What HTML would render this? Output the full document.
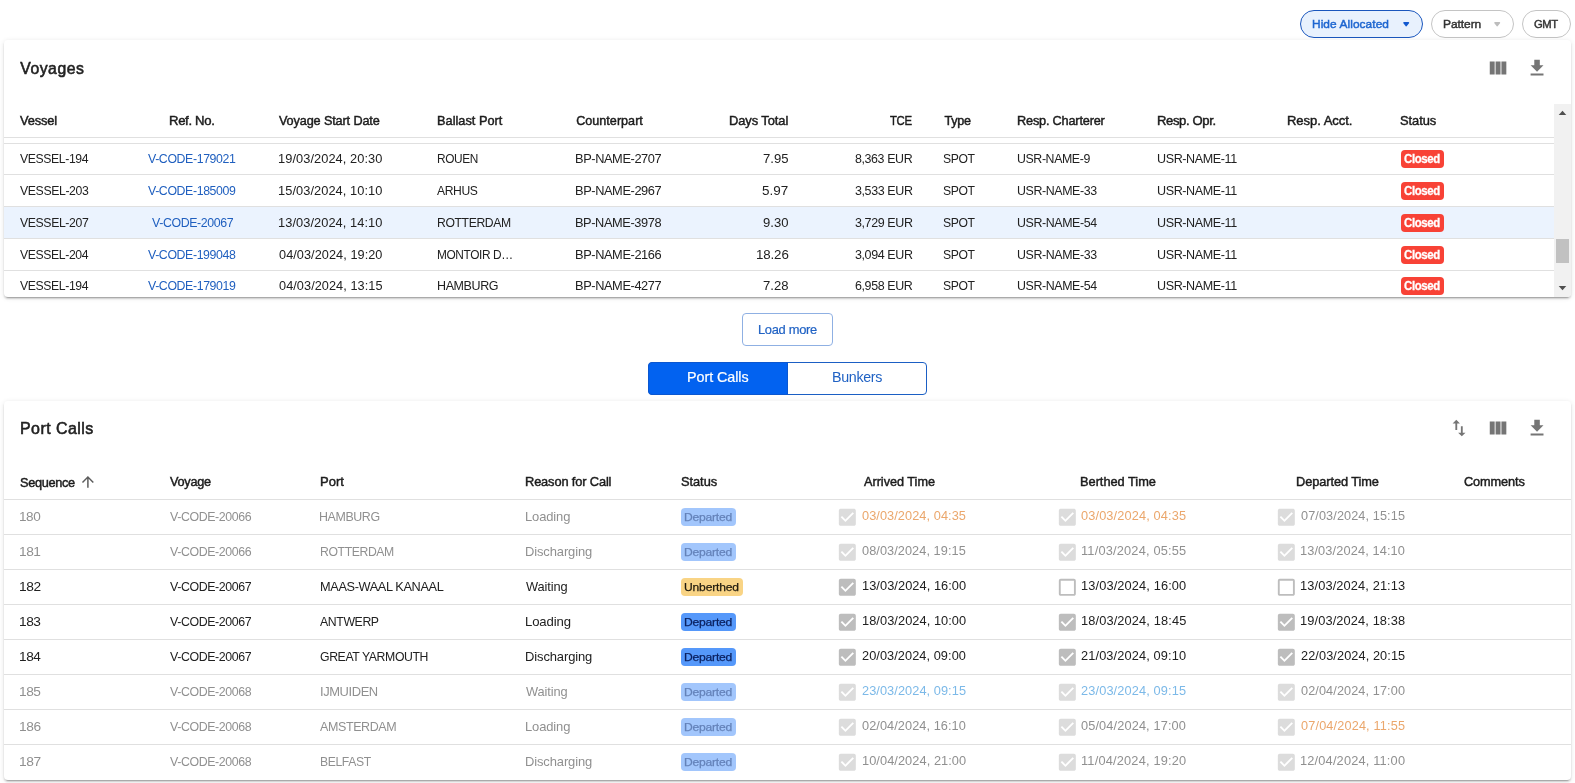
<!DOCTYPE html>
<html><head><meta charset="utf-8"><title>Voyages</title>
<style>
html,body{margin:0;padding:0;background:#fff;}
body{width:1575px;height:783px;position:relative;overflow:hidden;font-family:"Liberation Sans",sans-serif;}
#w{position:absolute;left:0;top:0;width:1575px;height:783px;will-change:transform;}
.t{position:absolute;white-space:nowrap;line-height:20px;height:20px;transform-origin:0 0;}
svg{display:block;overflow:visible}
</style></head><body><div id="w">
<div class="" style="position:absolute;left:1300px;top:10px;width:121px;height:25.6px;border:1px solid #1a56bd;background:#e8f1fd;border-radius:14px;"></div>
<span class="t" style="left:1312.31px;top:13.50px;font-size:11.7px;letter-spacing:0.069px;color:#1e66d0;transform:scaleX(1.0175);-webkit-text-stroke:0.45px #1e66d0;">Hide Allocated</span>
<svg style="position:absolute;left:1402.8px;top:21.9px" width="6.4" height="4.6" viewBox="0 0 6.4 4.6"><path d="M1 0.8H5.4L3.2 3.6Z" fill="#1259cf" stroke="#1259cf" stroke-width="1.6" stroke-linejoin="round"/></svg>
<div class="" style="position:absolute;left:1431.2px;top:10px;width:80.5px;height:25.6px;border:1px solid #c4c4c4;background:#fff;border-radius:14px;"></div>
<span class="t" style="left:1442.81px;top:13.50px;font-size:11.7px;letter-spacing:-0.067px;color:#333;transform:scaleX(1.0253);-webkit-text-stroke:0.45px #333;">Pattern</span>
<svg style="position:absolute;left:1493.7px;top:21.9px" width="6.4" height="4.6" viewBox="0 0 6.4 4.6"><path d="M1 0.8H5.4L3.2 3.6Z" fill="#bdbdbd" stroke="#bdbdbd" stroke-width="1.6" stroke-linejoin="round"/></svg>
<div class="" style="position:absolute;left:1522.2px;top:10px;width:46.7px;height:25.6px;border:1px solid #c4c4c4;background:#fff;border-radius:14px;"></div>
<span class="t" style="left:1534.26px;top:13.50px;font-size:11.7px;letter-spacing:-0.400px;color:#333;transform:scaleX(0.9631);-webkit-text-stroke:0.45px #333;">GMT</span>
<div class="" style="position:absolute;left:4px;top:40px;width:1567px;height:257px;background:#fff;border-radius:4px;box-shadow:0 3px 1px -2px rgba(0,0,0,.2),0 2px 2px 0 rgba(0,0,0,.14),0 1px 5px 0 rgba(0,0,0,.12);"></div>
<span class="t" style="left:20.30px;top:58.50px;font-size:15.75px;letter-spacing:0.517px;color:#212121;-webkit-text-stroke:0.55px #212121;">Voyages</span>
<svg style="position:absolute;left:1486.55px;top:57.20px" width="22.1" height="22.1" viewBox="0 0 24 24"><path fill="#757575" d="M14.67 5v14H9.33V5h5.34zm1 14H21V5h-5.33v14zm-7.34 0V5H3v14h5.33z"/></svg>
<svg style="position:absolute;left:1525.75px;top:57.25px" width="22.1" height="22.1" viewBox="0 0 24 24"><path fill="#757575" d="M19 9h-4V3H9v6H5l7 7 7-7zM5 18v2h14v-2H5z"/></svg>
<span class="t" style="left:20.21px;top:111.00px;font-size:12.6px;letter-spacing:-0.160px;color:#1c1c1c;transform:scaleX(1.0214);-webkit-text-stroke:0.45px #1c1c1c;">Vessel</span>
<span class="t" style="left:169.38px;top:111.00px;font-size:12.6px;letter-spacing:-0.329px;color:#1c1c1c;transform:scaleX(1.0436);-webkit-text-stroke:0.45px #1c1c1c;">Ref. No.</span>
<span class="t" style="left:279.02px;top:111.00px;font-size:12.6px;letter-spacing:-0.134px;color:#1c1c1c;transform:scaleX(1.0070);-webkit-text-stroke:0.45px #1c1c1c;">Voyage Start Date</span>
<span class="t" style="left:436.78px;top:111.00px;font-size:12.6px;letter-spacing:0.014px;color:#1c1c1c;transform:scaleX(1.0129);-webkit-text-stroke:0.45px #1c1c1c;">Ballast Port</span>
<span class="t" style="left:576.20px;top:111.00px;font-size:12.6px;letter-spacing:0.015px;color:#1c1c1c;-webkit-text-stroke:0.45px #1c1c1c;">Counterpart</span>
<span class="t" style="left:729.47px;top:111.00px;font-size:12.6px;letter-spacing:-0.078px;color:#1c1c1c;transform:scaleX(1.0249);-webkit-text-stroke:0.45px #1c1c1c;">Days Total</span>
<span class="t" style="left:889.90px;top:111.00px;font-size:12.6px;letter-spacing:-0.400px;color:#1c1c1c;transform:scaleX(0.9016);-webkit-text-stroke:0.45px #1c1c1c;">TCE</span>
<span class="t" style="left:944.60px;top:111.00px;font-size:12.6px;letter-spacing:-0.333px;color:#1c1c1c;-webkit-text-stroke:0.45px #1c1c1c;">Type</span>
<span class="t" style="left:1017.41px;top:111.00px;font-size:12.6px;letter-spacing:-0.196px;color:#1c1c1c;transform:scaleX(1.0110);-webkit-text-stroke:0.45px #1c1c1c;">Resp. Charterer</span>
<span class="t" style="left:1157.38px;top:111.00px;font-size:12.6px;letter-spacing:-0.350px;color:#1c1c1c;transform:scaleX(1.0362);-webkit-text-stroke:0.45px #1c1c1c;">Resp. Opr.</span>
<span class="t" style="left:1287.49px;top:111.00px;font-size:12.6px;letter-spacing:-0.045px;color:#1c1c1c;transform:scaleX(1.0347);-webkit-text-stroke:0.45px #1c1c1c;">Resp. Acct.</span>
<span class="t" style="left:1400.16px;top:111.00px;font-size:12.6px;letter-spacing:-0.040px;color:#1c1c1c;transform:scaleX(1.0228);-webkit-text-stroke:0.45px #1c1c1c;">Status</span>
<div class="" style="position:absolute;left:4px;top:137px;width:1550px;height:1px;background:#e0e0e0;"></div>
<div class="" style="position:absolute;left:4px;top:143px;width:1550px;height:1px;background:#e0e0e0;"></div>
<div class="" style="position:absolute;left:4px;top:207px;width:1550px;height:31px;background:#ebf3fe;"></div>
<div class="" style="position:absolute;left:4px;top:174px;width:1550px;height:1px;background:#e0e0e0;"></div>
<div class="" style="position:absolute;left:4px;top:206px;width:1550px;height:1px;background:#e0e0e0;"></div>
<div class="" style="position:absolute;left:4px;top:238px;width:1550px;height:1px;background:#e0e0e0;"></div>
<div class="" style="position:absolute;left:4px;top:270px;width:1550px;height:1px;background:#e0e0e0;"></div>
<span class="t" style="left:20.45px;top:149.00px;font-size:12.6px;letter-spacing:-0.400px;color:#212121;transform:scaleX(0.9698);">VESSEL-194</span>
<span class="t" style="left:148.18px;top:149.00px;font-size:12.6px;letter-spacing:-0.400px;color:#1f5fbf;transform:scaleX(0.9798);">V-CODE-179021</span>
<span class="t" style="left:278.22px;top:149.00px;font-size:12.6px;letter-spacing:0.069px;color:#212121;transform:scaleX(1.0171);">19/03/2024, 20:30</span>
<span class="t" style="left:436.80px;top:149.00px;font-size:12.6px;letter-spacing:-0.400px;color:#212121;transform:scaleX(0.9428);">ROUEN</span>
<span class="t" style="left:575.22px;top:149.00px;font-size:12.6px;letter-spacing:-0.400px;color:#212121;transform:scaleX(1.0172);">BP-NAME-2707</span>
<span class="t" style="left:762.64px;top:149.00px;font-size:12.6px;letter-spacing:0.000px;color:#212121;transform:scaleX(1.0399);">7.95</span>
<span class="t" style="left:855.31px;top:149.00px;font-size:12.6px;letter-spacing:-0.400px;color:#212121;transform:scaleX(0.9868);">8,363 EUR</span>
<span class="t" style="left:943.41px;top:149.00px;font-size:12.6px;letter-spacing:-0.400px;color:#212121;transform:scaleX(0.9669);">SPOT</span>
<span class="t" style="left:1016.98px;top:149.00px;font-size:12.6px;letter-spacing:-0.400px;color:#212121;transform:scaleX(0.9802);">USR-NAME-9</span>
<span class="t" style="left:1157.30px;top:149.00px;font-size:12.6px;letter-spacing:-0.400px;color:#212121;transform:scaleX(0.9967);">USR-NAME-11</span>
<div class="" style="position:absolute;left:1400.8px;top:150.1px;width:43.2px;height:17.9px;background:#f84236;border-radius:4px;"></div>
<span class="t" style="left:1404.45px;top:149.00px;font-size:12.5px;letter-spacing:-0.400px;color:#fff;transform:scaleX(0.9144);font-weight:700;-webkit-text-stroke:0.3px #fff;">Closed</span>
<span class="t" style="left:20.45px;top:181.00px;font-size:12.6px;letter-spacing:-0.400px;color:#212121;transform:scaleX(0.9740);">VESSEL-203</span>
<span class="t" style="left:148.18px;top:181.00px;font-size:12.6px;letter-spacing:-0.400px;color:#1f5fbf;transform:scaleX(0.9795);">V-CODE-185009</span>
<span class="t" style="left:278.22px;top:181.00px;font-size:12.6px;letter-spacing:0.069px;color:#212121;transform:scaleX(1.0171);">15/03/2024, 10:10</span>
<span class="t" style="left:436.96px;top:181.00px;font-size:12.6px;letter-spacing:-0.400px;color:#212121;transform:scaleX(0.9636);">ARHUS</span>
<span class="t" style="left:575.22px;top:181.00px;font-size:12.6px;letter-spacing:-0.400px;color:#212121;transform:scaleX(1.0172);">BP-NAME-2967</span>
<span class="t" style="left:762.34px;top:181.00px;font-size:12.6px;letter-spacing:0.000px;color:#212121;transform:scaleX(1.0689);">5.97</span>
<span class="t" style="left:855.09px;top:181.00px;font-size:12.6px;letter-spacing:-0.400px;color:#212121;transform:scaleX(0.9918);">3,533 EUR</span>
<span class="t" style="left:943.41px;top:181.00px;font-size:12.6px;letter-spacing:-0.400px;color:#212121;transform:scaleX(0.9669);">SPOT</span>
<span class="t" style="left:1016.91px;top:181.00px;font-size:12.6px;letter-spacing:-0.400px;color:#212121;transform:scaleX(0.9841);">USR-NAME-33</span>
<span class="t" style="left:1157.30px;top:181.00px;font-size:12.6px;letter-spacing:-0.400px;color:#212121;transform:scaleX(0.9967);">USR-NAME-11</span>
<div class="" style="position:absolute;left:1400.8px;top:182px;width:43.2px;height:17.9px;background:#f84236;border-radius:4px;"></div>
<span class="t" style="left:1404.45px;top:181.00px;font-size:12.5px;letter-spacing:-0.400px;color:#fff;transform:scaleX(0.9144);font-weight:700;-webkit-text-stroke:0.3px #fff;">Closed</span>
<span class="t" style="left:20.21px;top:213.00px;font-size:12.6px;letter-spacing:-0.400px;color:#212121;transform:scaleX(0.9730);">VESSEL-207</span>
<span class="t" style="left:151.91px;top:213.00px;font-size:12.6px;letter-spacing:-0.400px;color:#1f5fbf;transform:scaleX(0.9819);">V-CODE-20067</span>
<span class="t" style="left:278.22px;top:213.00px;font-size:12.6px;letter-spacing:0.069px;color:#212121;transform:scaleX(1.0171);">13/03/2024, 14:10</span>
<span class="t" style="left:436.80px;top:213.00px;font-size:12.6px;letter-spacing:-0.400px;color:#212121;transform:scaleX(0.9682);">ROTTERDAM</span>
<span class="t" style="left:575.22px;top:213.00px;font-size:12.6px;letter-spacing:-0.400px;color:#212121;transform:scaleX(1.0153);">BP-NAME-3978</span>
<span class="t" style="left:762.64px;top:213.00px;font-size:12.6px;letter-spacing:0.000px;color:#212121;transform:scaleX(1.0359);">9.30</span>
<span class="t" style="left:855.09px;top:213.00px;font-size:12.6px;letter-spacing:-0.400px;color:#212121;transform:scaleX(0.9918);">3,729 EUR</span>
<span class="t" style="left:943.41px;top:213.00px;font-size:12.6px;letter-spacing:-0.400px;color:#212121;transform:scaleX(0.9667);">SPOT</span>
<span class="t" style="left:1016.91px;top:213.00px;font-size:12.6px;letter-spacing:-0.400px;color:#212121;transform:scaleX(0.9840);">USR-NAME-54</span>
<span class="t" style="left:1157.30px;top:213.00px;font-size:12.6px;letter-spacing:-0.400px;color:#212121;transform:scaleX(0.9967);">USR-NAME-11</span>
<div class="" style="position:absolute;left:1400.8px;top:214.1px;width:43.2px;height:17.9px;background:#f84236;border-radius:4px;"></div>
<span class="t" style="left:1404.45px;top:213.00px;font-size:12.5px;letter-spacing:-0.400px;color:#fff;transform:scaleX(0.9144);font-weight:700;-webkit-text-stroke:0.3px #fff;">Closed</span>
<span class="t" style="left:20.45px;top:245.00px;font-size:12.6px;letter-spacing:-0.400px;color:#212121;transform:scaleX(0.9698);">VESSEL-204</span>
<span class="t" style="left:148.18px;top:245.00px;font-size:12.6px;letter-spacing:-0.400px;color:#1f5fbf;transform:scaleX(0.9794);">V-CODE-199048</span>
<span class="t" style="left:278.85px;top:245.00px;font-size:12.6px;letter-spacing:0.069px;color:#212121;transform:scaleX(1.0075);">04/03/2024, 19:20</span>
<span class="t" style="left:436.80px;top:245.00px;font-size:12.6px;letter-spacing:-0.400px;color:#212121;transform:scaleX(0.9423);">MONTOIR D…</span>
<span class="t" style="left:575.22px;top:245.00px;font-size:12.6px;letter-spacing:-0.400px;color:#212121;transform:scaleX(1.0172);">BP-NAME-2166</span>
<span class="t" style="left:755.83px;top:245.00px;font-size:12.6px;letter-spacing:-0.112px;color:#212121;transform:scaleX(1.0555);">18.26</span>
<span class="t" style="left:855.09px;top:245.00px;font-size:12.6px;letter-spacing:-0.400px;color:#212121;transform:scaleX(0.9918);">3,094 EUR</span>
<span class="t" style="left:943.41px;top:245.00px;font-size:12.6px;letter-spacing:-0.400px;color:#212121;transform:scaleX(0.9669);">SPOT</span>
<span class="t" style="left:1016.91px;top:245.00px;font-size:12.6px;letter-spacing:-0.400px;color:#212121;transform:scaleX(0.9841);">USR-NAME-33</span>
<span class="t" style="left:1157.30px;top:245.00px;font-size:12.6px;letter-spacing:-0.400px;color:#212121;transform:scaleX(0.9967);">USR-NAME-11</span>
<div class="" style="position:absolute;left:1400.8px;top:246.1px;width:43.2px;height:17.9px;background:#f84236;border-radius:4px;"></div>
<span class="t" style="left:1404.45px;top:245.00px;font-size:12.5px;letter-spacing:-0.400px;color:#fff;transform:scaleX(0.9144);font-weight:700;-webkit-text-stroke:0.3px #fff;">Closed</span>
<span class="t" style="left:20.45px;top:276.00px;font-size:12.6px;letter-spacing:-0.400px;color:#212121;transform:scaleX(0.9698);">VESSEL-194</span>
<span class="t" style="left:148.18px;top:276.00px;font-size:12.6px;letter-spacing:-0.400px;color:#1f5fbf;transform:scaleX(0.9795);">V-CODE-179019</span>
<span class="t" style="left:278.85px;top:276.00px;font-size:12.6px;letter-spacing:0.069px;color:#212121;transform:scaleX(1.0084);">04/03/2024, 13:15</span>
<span class="t" style="left:436.80px;top:276.00px;font-size:12.6px;letter-spacing:-0.400px;color:#212121;transform:scaleX(0.9925);">HAMBURG</span>
<span class="t" style="left:575.22px;top:276.00px;font-size:12.6px;letter-spacing:-0.400px;color:#212121;transform:scaleX(1.0172);">BP-NAME-4277</span>
<span class="t" style="left:762.64px;top:276.00px;font-size:12.6px;letter-spacing:0.000px;color:#212121;transform:scaleX(1.0393);">7.28</span>
<span class="t" style="left:855.19px;top:276.00px;font-size:12.6px;letter-spacing:-0.400px;color:#212121;transform:scaleX(0.9889);">6,958 EUR</span>
<span class="t" style="left:943.41px;top:276.00px;font-size:12.6px;letter-spacing:-0.400px;color:#212121;transform:scaleX(0.9669);">SPOT</span>
<span class="t" style="left:1016.91px;top:276.00px;font-size:12.6px;letter-spacing:-0.400px;color:#212121;transform:scaleX(0.9840);">USR-NAME-54</span>
<span class="t" style="left:1157.30px;top:276.00px;font-size:12.6px;letter-spacing:-0.400px;color:#212121;transform:scaleX(0.9967);">USR-NAME-11</span>
<div class="" style="position:absolute;left:1400.8px;top:277px;width:43.2px;height:17.9px;background:#f84236;border-radius:4px;"></div>
<span class="t" style="left:1404.45px;top:276.00px;font-size:12.5px;letter-spacing:-0.400px;color:#fff;transform:scaleX(0.9144);font-weight:700;-webkit-text-stroke:0.3px #fff;">Closed</span>
<div class="" style="position:absolute;left:1554px;top:104px;width:17px;height:193px;background:#f1f1f1;border-bottom-right-radius:4px;"></div>
<div class="" style="position:absolute;left:1556px;top:239px;width:13px;height:23.5px;background:#c1c1c1;"></div>
<svg style="position:absolute;left:1558px;top:110px" width="9" height="6" viewBox="0 0 9 6"><path d="M4.5 0.8L8.3 5H0.7Z" fill="#505050"/></svg>
<svg style="position:absolute;left:1558px;top:285px" width="9" height="6" viewBox="0 0 9 6"><path d="M4.5 5.2L8.3 1H0.7Z" fill="#505050"/></svg>
<div class="" style="position:absolute;left:742.2px;top:313.4px;width:88.7px;height:30.4px;border:1px solid #8fb0e3;border-radius:4px;background:#fff;"></div>
<span class="t" style="left:757.58px;top:320.00px;font-size:12.6px;letter-spacing:-0.294px;color:#2062c4;transform:scaleX(1.0242);-webkit-text-stroke:0.2px #2062c4;">Load more</span>
<div class="" style="position:absolute;left:648px;top:362px;width:277px;height:31px;border:1px solid #1b5fc4;border-radius:4px;background:#fff;"></div>
<div class="" style="position:absolute;left:648px;top:362px;width:138px;height:31px;background:#0262f0;border:1px solid #0b57d0;border-radius:4px 0 0 4px;"></div>
<span class="t" style="left:687.13px;top:367.00px;font-size:13.9px;letter-spacing:-0.050px;color:#fff;transform:scaleX(1.0308);-webkit-text-stroke:0.2px #fff;">Port Calls</span>
<span class="t" style="left:831.90px;top:367.00px;font-size:13.9px;letter-spacing:-0.317px;color:#2062c4;transform:scaleX(1.0260);">Bunkers</span>
<div class="" style="position:absolute;left:4px;top:400.5px;width:1567px;height:379px;background:#fff;border-radius:4px;box-shadow:0 3px 1px -2px rgba(0,0,0,.2),0 2px 2px 0 rgba(0,0,0,.14),0 1px 5px 0 rgba(0,0,0,.12);"></div>
<span class="t" style="left:19.80px;top:418.50px;font-size:15.75px;letter-spacing:0.439px;color:#212121;transform:scaleX(1.0140);-webkit-text-stroke:0.55px #212121;">Port Calls</span>
<svg style="position:absolute;left:1448.10px;top:417.10px" width="22.1" height="22.1" viewBox="0 0 24 24"><path fill="#757575" d="M9 3 5 6.990h3V14h2V6.990h3L9 3zm7 14.010V10h-2v7.010h-3L15 21l4-3.990h-3z"/></svg>
<svg style="position:absolute;left:1486.55px;top:417.15px" width="22.1" height="22.1" viewBox="0 0 24 24"><path fill="#757575" d="M14.67 5v14H9.33V5h5.34zm1 14H21V5h-5.33v14zm-7.34 0V5H3v14h5.33z"/></svg>
<svg style="position:absolute;left:1525.75px;top:417.25px" width="22.1" height="22.1" viewBox="0 0 24 24"><path fill="#757575" d="M19 9h-4V3H9v6H5l7 7 7-7zM5 18v2h14v-2H5z"/></svg>
<span class="t" style="left:20.01px;top:473.00px;font-size:12.6px;letter-spacing:-0.336px;color:#1c1c1c;transform:scaleX(1.0124);-webkit-text-stroke:0.45px #1c1c1c;">Sequence</span>
<span class="t" style="left:170.30px;top:472.00px;font-size:12.6px;letter-spacing:-0.270px;color:#1c1c1c;transform:scaleX(1.0101);-webkit-text-stroke:0.45px #1c1c1c;">Voyage</span>
<span class="t" style="left:320.14px;top:472.00px;font-size:12.6px;letter-spacing:0.033px;color:#1c1c1c;transform:scaleX(1.0324);-webkit-text-stroke:0.45px #1c1c1c;">Port</span>
<span class="t" style="left:525.18px;top:472.00px;font-size:12.6px;letter-spacing:-0.146px;color:#1c1c1c;transform:scaleX(1.0199);-webkit-text-stroke:0.45px #1c1c1c;">Reason for Call</span>
<span class="t" style="left:681.01px;top:472.00px;font-size:12.6px;letter-spacing:-0.040px;color:#1c1c1c;transform:scaleX(1.0177);-webkit-text-stroke:0.45px #1c1c1c;">Status</span>
<span class="t" style="left:863.75px;top:472.00px;font-size:12.6px;letter-spacing:-0.009px;color:#1c1c1c;transform:scaleX(1.0063);-webkit-text-stroke:0.45px #1c1c1c;">Arrived Time</span>
<span class="t" style="left:1080.16px;top:472.00px;font-size:12.6px;letter-spacing:-0.023px;color:#1c1c1c;transform:scaleX(1.0176);-webkit-text-stroke:0.45px #1c1c1c;">Berthed Time</span>
<span class="t" style="left:1296.17px;top:472.00px;font-size:12.6px;letter-spacing:-0.087px;color:#1c1c1c;transform:scaleX(1.0170);-webkit-text-stroke:0.45px #1c1c1c;">Departed Time</span>
<span class="t" style="left:1464.12px;top:472.00px;font-size:12.6px;letter-spacing:-0.114px;color:#1c1c1c;transform:scaleX(1.0124);-webkit-text-stroke:0.45px #1c1c1c;">Comments</span>
<svg style="position:absolute;left:79.1px;top:473.1px" width="17.8" height="17.8" viewBox="0 0 24 24"><path fill="#5c5c5c" d="m4 12 1.410 1.410L11 7.830V20h2V7.830l5.580 5.590L20 12l-8-8-8 8z"/></svg>
<div class="" style="position:absolute;left:4px;top:499px;width:1567px;height:1px;background:#e0e0e0;"></div>
<div class="" style="position:absolute;left:4px;top:534px;width:1567px;height:1px;background:#e0e0e0;"></div>
<div class="" style="position:absolute;left:4px;top:569px;width:1567px;height:1px;background:#e0e0e0;"></div>
<div class="" style="position:absolute;left:4px;top:604px;width:1567px;height:1px;background:#e0e0e0;"></div>
<div class="" style="position:absolute;left:4px;top:639px;width:1567px;height:1px;background:#e0e0e0;"></div>
<div class="" style="position:absolute;left:4px;top:674px;width:1567px;height:1px;background:#e0e0e0;"></div>
<div class="" style="position:absolute;left:4px;top:709px;width:1567px;height:1px;background:#e0e0e0;"></div>
<div class="" style="position:absolute;left:4px;top:744px;width:1567px;height:1px;background:#e0e0e0;"></div>
<span class="t" style="left:19.04px;top:507.00px;font-size:12.6px;letter-spacing:-0.400px;color:#909090;transform:scaleX(1.0758);">180</span>
<span class="t" style="left:170.44px;top:507.00px;font-size:12.6px;letter-spacing:-0.400px;color:#909090;transform:scaleX(0.9817);">V-CODE-20066</span>
<span class="t" style="left:319.48px;top:507.00px;font-size:12.6px;letter-spacing:-0.400px;color:#909090;transform:scaleX(0.9853);">HAMBURG</span>
<span class="t" style="left:525.00px;top:507.00px;font-size:12.6px;letter-spacing:-0.125px;color:#909090;transform:scaleX(1.0299);">Loading</span>
<div class="" style="position:absolute;left:681px;top:508px;width:55px;height:18px;background:#a2c6fc;border-radius:4px;"></div>
<span class="t" style="left:684.21px;top:506.50px;font-size:11.7px;letter-spacing:-0.221px;color:#6482b9;transform:scaleX(1.0361);-webkit-text-stroke:0.25px #6482b9;">Departed</span>
<svg style="position:absolute;left:835.87px;top:505.77px" width="22.66" height="22.66" viewBox="0 0 24 24"><path fill="#dcdcdc" d="M19 3H5c-1.110 0-2 .9-2 2v14c0 1.100.890 2 2 2h14c1.110 0 2-.9 2-2V5c0-1.100-.890-2-2-2zm-9 14l-5-5 1.410-1.410L10 14.170l7.590-7.590L19 8l-9 9z"/></svg>
<span class="t" style="left:862.08px;top:506.00px;font-size:12.6px;letter-spacing:0.062px;color:#eba76c;transform:scaleX(1.0138);">03/03/2024, 04:35</span>
<svg style="position:absolute;left:1055.77px;top:505.77px" width="22.66" height="22.66" viewBox="0 0 24 24"><path fill="#dcdcdc" d="M19 3H5c-1.110 0-2 .9-2 2v14c0 1.100.890 2 2 2h14c1.110 0 2-.9 2-2V5c0-1.100-.890-2-2-2zm-9 14l-5-5 1.410-1.410L10 14.170l7.590-7.590L19 8l-9 9z"/></svg>
<span class="t" style="left:1081.49px;top:506.00px;font-size:12.6px;letter-spacing:0.125px;color:#eba76c;transform:scaleX(1.0141);">03/03/2024, 04:35</span>
<svg style="position:absolute;left:1274.87px;top:505.77px" width="22.66" height="22.66" viewBox="0 0 24 24"><path fill="#dcdcdc" d="M19 3H5c-1.110 0-2 .9-2 2v14c0 1.100.890 2 2 2h14c1.110 0 2-.9 2-2V5c0-1.100-.890-2-2-2zm-9 14l-5-5 1.410-1.410L10 14.170l7.590-7.590L19 8l-9 9z"/></svg>
<span class="t" style="left:1300.87px;top:506.00px;font-size:12.6px;letter-spacing:0.106px;color:#909090;transform:scaleX(1.0067);">07/03/2024, 15:15</span>
<span class="t" style="left:19.04px;top:542.00px;font-size:12.6px;letter-spacing:-0.400px;color:#909090;transform:scaleX(1.0866);">181</span>
<span class="t" style="left:170.44px;top:542.00px;font-size:12.6px;letter-spacing:-0.400px;color:#909090;transform:scaleX(0.9817);">V-CODE-20066</span>
<span class="t" style="left:319.90px;top:542.00px;font-size:12.6px;letter-spacing:-0.400px;color:#909090;transform:scaleX(0.9705);">ROTTERDAM</span>
<span class="t" style="left:524.79px;top:542.00px;font-size:12.6px;letter-spacing:-0.115px;color:#909090;transform:scaleX(1.0295);">Discharging</span>
<div class="" style="position:absolute;left:681px;top:543px;width:55px;height:18px;background:#a2c6fc;border-radius:4px;"></div>
<span class="t" style="left:684.21px;top:541.50px;font-size:11.7px;letter-spacing:-0.221px;color:#6482b9;transform:scaleX(1.0361);-webkit-text-stroke:0.25px #6482b9;">Departed</span>
<svg style="position:absolute;left:835.87px;top:540.77px" width="22.66" height="22.66" viewBox="0 0 24 24"><path fill="#dcdcdc" d="M19 3H5c-1.110 0-2 .9-2 2v14c0 1.100.890 2 2 2h14c1.110 0 2-.9 2-2V5c0-1.100-.890-2-2-2zm-9 14l-5-5 1.410-1.410L10 14.170l7.590-7.590L19 8l-9 9z"/></svg>
<span class="t" style="left:862.49px;top:541.00px;font-size:12.6px;letter-spacing:0.062px;color:#909090;transform:scaleX(1.0120);">08/03/2024, 19:15</span>
<svg style="position:absolute;left:1055.77px;top:540.77px" width="22.66" height="22.66" viewBox="0 0 24 24"><path fill="#dcdcdc" d="M19 3H5c-1.110 0-2 .9-2 2v14c0 1.100.890 2 2 2h14c1.110 0 2-.9 2-2V5c0-1.100-.890-2-2-2zm-9 14l-5-5 1.410-1.410L10 14.170l7.590-7.590L19 8l-9 9z"/></svg>
<span class="t" style="left:1081.10px;top:541.00px;font-size:12.6px;letter-spacing:0.184px;color:#909090;transform:scaleX(1.0163);">11/03/2024, 05:55</span>
<svg style="position:absolute;left:1274.87px;top:540.77px" width="22.66" height="22.66" viewBox="0 0 24 24"><path fill="#dcdcdc" d="M19 3H5c-1.110 0-2 .9-2 2v14c0 1.100.890 2 2 2h14c1.110 0 2-.9 2-2V5c0-1.100-.890-2-2-2zm-9 14l-5-5 1.410-1.410L10 14.170l7.590-7.590L19 8l-9 9z"/></svg>
<span class="t" style="left:1300.36px;top:541.00px;font-size:12.6px;letter-spacing:0.106px;color:#909090;transform:scaleX(1.0168);">13/03/2024, 14:10</span>
<span class="t" style="left:19.04px;top:577.00px;font-size:12.6px;letter-spacing:-0.400px;color:#212121;transform:scaleX(1.0897);">182</span>
<span class="t" style="left:170.40px;top:577.00px;font-size:12.6px;letter-spacing:-0.400px;color:#212121;transform:scaleX(0.9824);">V-CODE-20067</span>
<span class="t" style="left:319.76px;top:577.00px;font-size:12.6px;letter-spacing:-0.373px;color:#212121;transform:scaleX(1.0127);">MAAS-WAAL KANAAL</span>
<span class="t" style="left:525.98px;top:577.00px;font-size:12.6px;letter-spacing:-0.092px;color:#212121;transform:scaleX(1.0183);">Waiting</span>
<div class="" style="position:absolute;left:681px;top:578px;width:62px;height:18px;background:#f9d485;border-radius:4px;"></div>
<span class="t" style="left:684.27px;top:576.50px;font-size:11.7px;letter-spacing:-0.169px;color:#1f1a0e;transform:scaleX(1.0331);-webkit-text-stroke:0.25px #1f1a0e;">Unberthed</span>
<svg style="position:absolute;left:835.87px;top:575.77px" width="22.66" height="22.66" viewBox="0 0 24 24"><path fill="#bdbdbd" d="M19 3H5c-1.110 0-2 .9-2 2v14c0 1.100.890 2 2 2h14c1.110 0 2-.9 2-2V5c0-1.100-.890-2-2-2zm-9 14l-5-5 1.410-1.410L10 14.170l7.590-7.590L19 8l-9 9z"/></svg>
<span class="t" style="left:861.85px;top:576.00px;font-size:12.6px;letter-spacing:0.062px;color:#212121;transform:scaleX(1.0159);">13/03/2024, 16:00</span>
<svg style="position:absolute;left:1055.77px;top:575.77px" width="22.66" height="22.66" viewBox="0 0 24 24"><path fill="#bdbdbd" d="M19 5v14H5V5h14m0-2H5c-1.100 0-2 .9-2 2v14c0 1.100.9 2 2 2h14c1.100 0 2-.9 2-2V5c0-1.100-.9-2-2-2z"/></svg>
<span class="t" style="left:1081.09px;top:576.00px;font-size:12.6px;letter-spacing:0.125px;color:#212121;transform:scaleX(1.0157);">13/03/2024, 16:00</span>
<svg style="position:absolute;left:1274.87px;top:575.77px" width="22.66" height="22.66" viewBox="0 0 24 24"><path fill="#bdbdbd" d="M19 5v14H5V5h14m0-2H5c-1.100 0-2 .9-2 2v14c0 1.100.9 2 2 2h14c1.100 0 2-.9 2-2V5c0-1.100-.9-2-2-2z"/></svg>
<span class="t" style="left:1300.36px;top:576.00px;font-size:12.6px;letter-spacing:0.106px;color:#212121;transform:scaleX(1.0187);">13/03/2024, 21:13</span>
<span class="t" style="left:19.04px;top:612.00px;font-size:12.6px;letter-spacing:-0.400px;color:#212121;transform:scaleX(1.0873);">183</span>
<span class="t" style="left:170.40px;top:612.00px;font-size:12.6px;letter-spacing:-0.400px;color:#212121;transform:scaleX(0.9824);">V-CODE-20067</span>
<span class="t" style="left:319.96px;top:612.00px;font-size:12.6px;letter-spacing:-0.400px;color:#212121;transform:scaleX(0.9748);">ANTWERP</span>
<span class="t" style="left:524.78px;top:612.00px;font-size:12.6px;letter-spacing:-0.125px;color:#212121;transform:scaleX(1.0425);">Loading</span>
<div class="" style="position:absolute;left:681px;top:613px;width:55px;height:18px;background:#5598fa;border-radius:4px;"></div>
<span class="t" style="left:684.16px;top:611.50px;font-size:11.7px;letter-spacing:-0.221px;color:#0b2160;transform:scaleX(1.0377);-webkit-text-stroke:0.25px #0b2160;">Departed</span>
<svg style="position:absolute;left:835.87px;top:610.77px" width="22.66" height="22.66" viewBox="0 0 24 24"><path fill="#bdbdbd" d="M19 3H5c-1.110 0-2 .9-2 2v14c0 1.100.890 2 2 2h14c1.110 0 2-.9 2-2V5c0-1.100-.890-2-2-2zm-9 14l-5-5 1.410-1.410L10 14.170l7.590-7.590L19 8l-9 9z"/></svg>
<span class="t" style="left:861.85px;top:611.00px;font-size:12.6px;letter-spacing:0.062px;color:#212121;transform:scaleX(1.0159);">18/03/2024, 10:00</span>
<svg style="position:absolute;left:1055.77px;top:610.77px" width="22.66" height="22.66" viewBox="0 0 24 24"><path fill="#bdbdbd" d="M19 3H5c-1.110 0-2 .9-2 2v14c0 1.100.890 2 2 2h14c1.110 0 2-.9 2-2V5c0-1.100-.890-2-2-2zm-9 14l-5-5 1.410-1.410L10 14.170l7.590-7.590L19 8l-9 9z"/></svg>
<span class="t" style="left:1081.09px;top:611.00px;font-size:12.6px;letter-spacing:0.125px;color:#212121;transform:scaleX(1.0165);">18/03/2024, 18:45</span>
<svg style="position:absolute;left:1274.87px;top:610.77px" width="22.66" height="22.66" viewBox="0 0 24 24"><path fill="#bdbdbd" d="M19 3H5c-1.110 0-2 .9-2 2v14c0 1.100.890 2 2 2h14c1.110 0 2-.9 2-2V5c0-1.100-.890-2-2-2zm-9 14l-5-5 1.410-1.410L10 14.170l7.590-7.590L19 8l-9 9z"/></svg>
<span class="t" style="left:1300.36px;top:611.00px;font-size:12.6px;letter-spacing:0.106px;color:#212121;transform:scaleX(1.0186);">19/03/2024, 18:38</span>
<span class="t" style="left:19.04px;top:647.00px;font-size:12.6px;letter-spacing:-0.400px;color:#212121;transform:scaleX(1.0793);">184</span>
<span class="t" style="left:170.40px;top:647.00px;font-size:12.6px;letter-spacing:-0.400px;color:#212121;transform:scaleX(0.9824);">V-CODE-20067</span>
<span class="t" style="left:320.02px;top:647.00px;font-size:12.6px;letter-spacing:-0.400px;color:#212121;transform:scaleX(0.9732);">GREAT YARMOUTH</span>
<span class="t" style="left:524.78px;top:647.00px;font-size:12.6px;letter-spacing:-0.115px;color:#212121;transform:scaleX(1.0299);">Discharging</span>
<div class="" style="position:absolute;left:681px;top:648px;width:55px;height:18px;background:#5598fa;border-radius:4px;"></div>
<span class="t" style="left:684.16px;top:646.50px;font-size:11.7px;letter-spacing:-0.221px;color:#0b2160;transform:scaleX(1.0377);-webkit-text-stroke:0.25px #0b2160;">Departed</span>
<svg style="position:absolute;left:835.87px;top:645.77px" width="22.66" height="22.66" viewBox="0 0 24 24"><path fill="#bdbdbd" d="M19 3H5c-1.110 0-2 .9-2 2v14c0 1.100.890 2 2 2h14c1.110 0 2-.9 2-2V5c0-1.100-.890-2-2-2zm-9 14l-5-5 1.410-1.410L10 14.170l7.590-7.590L19 8l-9 9z"/></svg>
<span class="t" style="left:861.90px;top:646.00px;font-size:12.6px;letter-spacing:0.062px;color:#212121;transform:scaleX(1.0132);">20/03/2024, 09:00</span>
<svg style="position:absolute;left:1055.77px;top:645.77px" width="22.66" height="22.66" viewBox="0 0 24 24"><path fill="#bdbdbd" d="M19 3H5c-1.110 0-2 .9-2 2v14c0 1.100.890 2 2 2h14c1.110 0 2-.9 2-2V5c0-1.100-.890-2-2-2zm-9 14l-5-5 1.410-1.410L10 14.170l7.590-7.590L19 8l-9 9z"/></svg>
<span class="t" style="left:1081.12px;top:646.00px;font-size:12.6px;letter-spacing:0.125px;color:#212121;transform:scaleX(1.0142);">21/03/2024, 09:10</span>
<svg style="position:absolute;left:1274.87px;top:645.77px" width="22.66" height="22.66" viewBox="0 0 24 24"><path fill="#bdbdbd" d="M19 3H5c-1.110 0-2 .9-2 2v14c0 1.100.890 2 2 2h14c1.110 0 2-.9 2-2V5c0-1.100-.890-2-2-2zm-9 14l-5-5 1.410-1.410L10 14.170l7.590-7.590L19 8l-9 9z"/></svg>
<span class="t" style="left:1300.64px;top:646.00px;font-size:12.6px;letter-spacing:0.106px;color:#212121;transform:scaleX(1.0089);">22/03/2024, 20:15</span>
<span class="t" style="left:19.04px;top:682.00px;font-size:12.6px;letter-spacing:-0.400px;color:#909090;transform:scaleX(1.0875);">185</span>
<span class="t" style="left:170.44px;top:682.00px;font-size:12.6px;letter-spacing:-0.400px;color:#909090;transform:scaleX(0.9811);">V-CODE-20068</span>
<span class="t" style="left:319.76px;top:682.00px;font-size:12.6px;letter-spacing:-0.400px;color:#909090;transform:scaleX(1.0271);">IJMUIDEN</span>
<span class="t" style="left:525.98px;top:682.00px;font-size:12.6px;letter-spacing:-0.092px;color:#909090;transform:scaleX(1.0178);">Waiting</span>
<div class="" style="position:absolute;left:681px;top:683px;width:55px;height:18px;background:#a2c6fc;border-radius:4px;"></div>
<span class="t" style="left:684.21px;top:681.50px;font-size:11.7px;letter-spacing:-0.221px;color:#6482b9;transform:scaleX(1.0361);-webkit-text-stroke:0.25px #6482b9;">Departed</span>
<svg style="position:absolute;left:835.87px;top:680.77px" width="22.66" height="22.66" viewBox="0 0 24 24"><path fill="#dcdcdc" d="M19 3H5c-1.110 0-2 .9-2 2v14c0 1.100.890 2 2 2h14c1.110 0 2-.9 2-2V5c0-1.100-.890-2-2-2zm-9 14l-5-5 1.410-1.410L10 14.170l7.590-7.590L19 8l-9 9z"/></svg>
<span class="t" style="left:861.98px;top:681.00px;font-size:12.6px;letter-spacing:0.062px;color:#7cb9e8;transform:scaleX(1.0142);">23/03/2024, 09:15</span>
<svg style="position:absolute;left:1055.77px;top:680.77px" width="22.66" height="22.66" viewBox="0 0 24 24"><path fill="#dcdcdc" d="M19 3H5c-1.110 0-2 .9-2 2v14c0 1.100.890 2 2 2h14c1.110 0 2-.9 2-2V5c0-1.100-.890-2-2-2zm-9 14l-5-5 1.410-1.410L10 14.170l7.590-7.590L19 8l-9 9z"/></svg>
<span class="t" style="left:1081.01px;top:681.00px;font-size:12.6px;letter-spacing:0.125px;color:#7cb9e8;transform:scaleX(1.0147);">23/03/2024, 09:15</span>
<svg style="position:absolute;left:1274.87px;top:680.77px" width="22.66" height="22.66" viewBox="0 0 24 24"><path fill="#dcdcdc" d="M19 3H5c-1.110 0-2 .9-2 2v14c0 1.100.890 2 2 2h14c1.110 0 2-.9 2-2V5c0-1.100-.890-2-2-2zm-9 14l-5-5 1.410-1.410L10 14.170l7.590-7.590L19 8l-9 9z"/></svg>
<span class="t" style="left:1300.87px;top:681.00px;font-size:12.6px;letter-spacing:0.106px;color:#909090;transform:scaleX(1.0067);">02/04/2024, 17:00</span>
<span class="t" style="left:19.04px;top:717.00px;font-size:12.6px;letter-spacing:-0.400px;color:#909090;transform:scaleX(1.0884);">186</span>
<span class="t" style="left:170.44px;top:717.00px;font-size:12.6px;letter-spacing:-0.400px;color:#909090;transform:scaleX(0.9811);">V-CODE-20068</span>
<span class="t" style="left:319.90px;top:717.00px;font-size:12.6px;letter-spacing:-0.400px;color:#909090;transform:scaleX(0.9925);">AMSTERDAM</span>
<span class="t" style="left:525.00px;top:717.00px;font-size:12.6px;letter-spacing:-0.125px;color:#909090;transform:scaleX(1.0299);">Loading</span>
<div class="" style="position:absolute;left:681px;top:718px;width:55px;height:18px;background:#a2c6fc;border-radius:4px;"></div>
<span class="t" style="left:684.21px;top:716.50px;font-size:11.7px;letter-spacing:-0.221px;color:#6482b9;transform:scaleX(1.0361);-webkit-text-stroke:0.25px #6482b9;">Departed</span>
<svg style="position:absolute;left:835.87px;top:715.77px" width="22.66" height="22.66" viewBox="0 0 24 24"><path fill="#dcdcdc" d="M19 3H5c-1.110 0-2 .9-2 2v14c0 1.100.890 2 2 2h14c1.110 0 2-.9 2-2V5c0-1.100-.890-2-2-2zm-9 14l-5-5 1.410-1.410L10 14.170l7.590-7.590L19 8l-9 9z"/></svg>
<span class="t" style="left:862.25px;top:716.00px;font-size:12.6px;letter-spacing:0.062px;color:#909090;transform:scaleX(1.0124);">02/04/2024, 16:10</span>
<svg style="position:absolute;left:1055.77px;top:715.77px" width="22.66" height="22.66" viewBox="0 0 24 24"><path fill="#dcdcdc" d="M19 3H5c-1.110 0-2 .9-2 2v14c0 1.100.890 2 2 2h14c1.110 0 2-.9 2-2V5c0-1.100-.890-2-2-2zm-9 14l-5-5 1.410-1.410L10 14.170l7.590-7.590L19 8l-9 9z"/></svg>
<span class="t" style="left:1081.20px;top:716.00px;font-size:12.6px;letter-spacing:0.125px;color:#909090;transform:scaleX(1.0130);">05/04/2024, 17:00</span>
<svg style="position:absolute;left:1274.87px;top:715.77px" width="22.66" height="22.66" viewBox="0 0 24 24"><path fill="#dcdcdc" d="M19 3H5c-1.110 0-2 .9-2 2v14c0 1.100.890 2 2 2h14c1.110 0 2-.9 2-2V5c0-1.100-.890-2-2-2zm-9 14l-5-5 1.410-1.410L10 14.170l7.590-7.590L19 8l-9 9z"/></svg>
<span class="t" style="left:1300.87px;top:716.00px;font-size:12.6px;letter-spacing:0.166px;color:#eba76c;transform:scaleX(1.0067);">07/04/2024, 11:55</span>
<span class="t" style="left:19.25px;top:752.00px;font-size:12.6px;letter-spacing:-0.400px;color:#909090;transform:scaleX(1.0941);">187</span>
<span class="t" style="left:170.44px;top:752.00px;font-size:12.6px;letter-spacing:-0.400px;color:#909090;transform:scaleX(0.9811);">V-CODE-20068</span>
<span class="t" style="left:319.76px;top:752.00px;font-size:12.6px;letter-spacing:-0.400px;color:#909090;transform:scaleX(0.9670);">BELFAST</span>
<span class="t" style="left:524.79px;top:752.00px;font-size:12.6px;letter-spacing:-0.115px;color:#909090;transform:scaleX(1.0295);">Discharging</span>
<div class="" style="position:absolute;left:681px;top:753px;width:55px;height:18px;background:#a2c6fc;border-radius:4px;"></div>
<span class="t" style="left:684.21px;top:751.50px;font-size:11.7px;letter-spacing:-0.221px;color:#6482b9;transform:scaleX(1.0361);-webkit-text-stroke:0.25px #6482b9;">Departed</span>
<svg style="position:absolute;left:835.87px;top:750.77px" width="22.66" height="22.66" viewBox="0 0 24 24"><path fill="#dcdcdc" d="M19 3H5c-1.110 0-2 .9-2 2v14c0 1.100.890 2 2 2h14c1.110 0 2-.9 2-2V5c0-1.100-.890-2-2-2zm-9 14l-5-5 1.410-1.410L10 14.170l7.590-7.590L19 8l-9 9z"/></svg>
<span class="t" style="left:861.86px;top:751.00px;font-size:12.6px;letter-spacing:0.062px;color:#909090;transform:scaleX(1.0156);">10/04/2024, 21:00</span>
<svg style="position:absolute;left:1055.77px;top:750.77px" width="22.66" height="22.66" viewBox="0 0 24 24"><path fill="#dcdcdc" d="M19 3H5c-1.110 0-2 .9-2 2v14c0 1.100.890 2 2 2h14c1.110 0 2-.9 2-2V5c0-1.100-.890-2-2-2zm-9 14l-5-5 1.410-1.410L10 14.170l7.590-7.590L19 8l-9 9z"/></svg>
<span class="t" style="left:1081.10px;top:751.00px;font-size:12.6px;letter-spacing:0.184px;color:#909090;transform:scaleX(1.0155);">11/04/2024, 19:20</span>
<svg style="position:absolute;left:1274.87px;top:750.77px" width="22.66" height="22.66" viewBox="0 0 24 24"><path fill="#dcdcdc" d="M19 3H5c-1.110 0-2 .9-2 2v14c0 1.100.890 2 2 2h14c1.110 0 2-.9 2-2V5c0-1.100-.890-2-2-2zm-9 14l-5-5 1.410-1.410L10 14.170l7.590-7.590L19 8l-9 9z"/></svg>
<span class="t" style="left:1300.36px;top:751.00px;font-size:12.6px;letter-spacing:0.166px;color:#909090;transform:scaleX(1.0168);">12/04/2024, 11:00</span>
</div></body></html>
